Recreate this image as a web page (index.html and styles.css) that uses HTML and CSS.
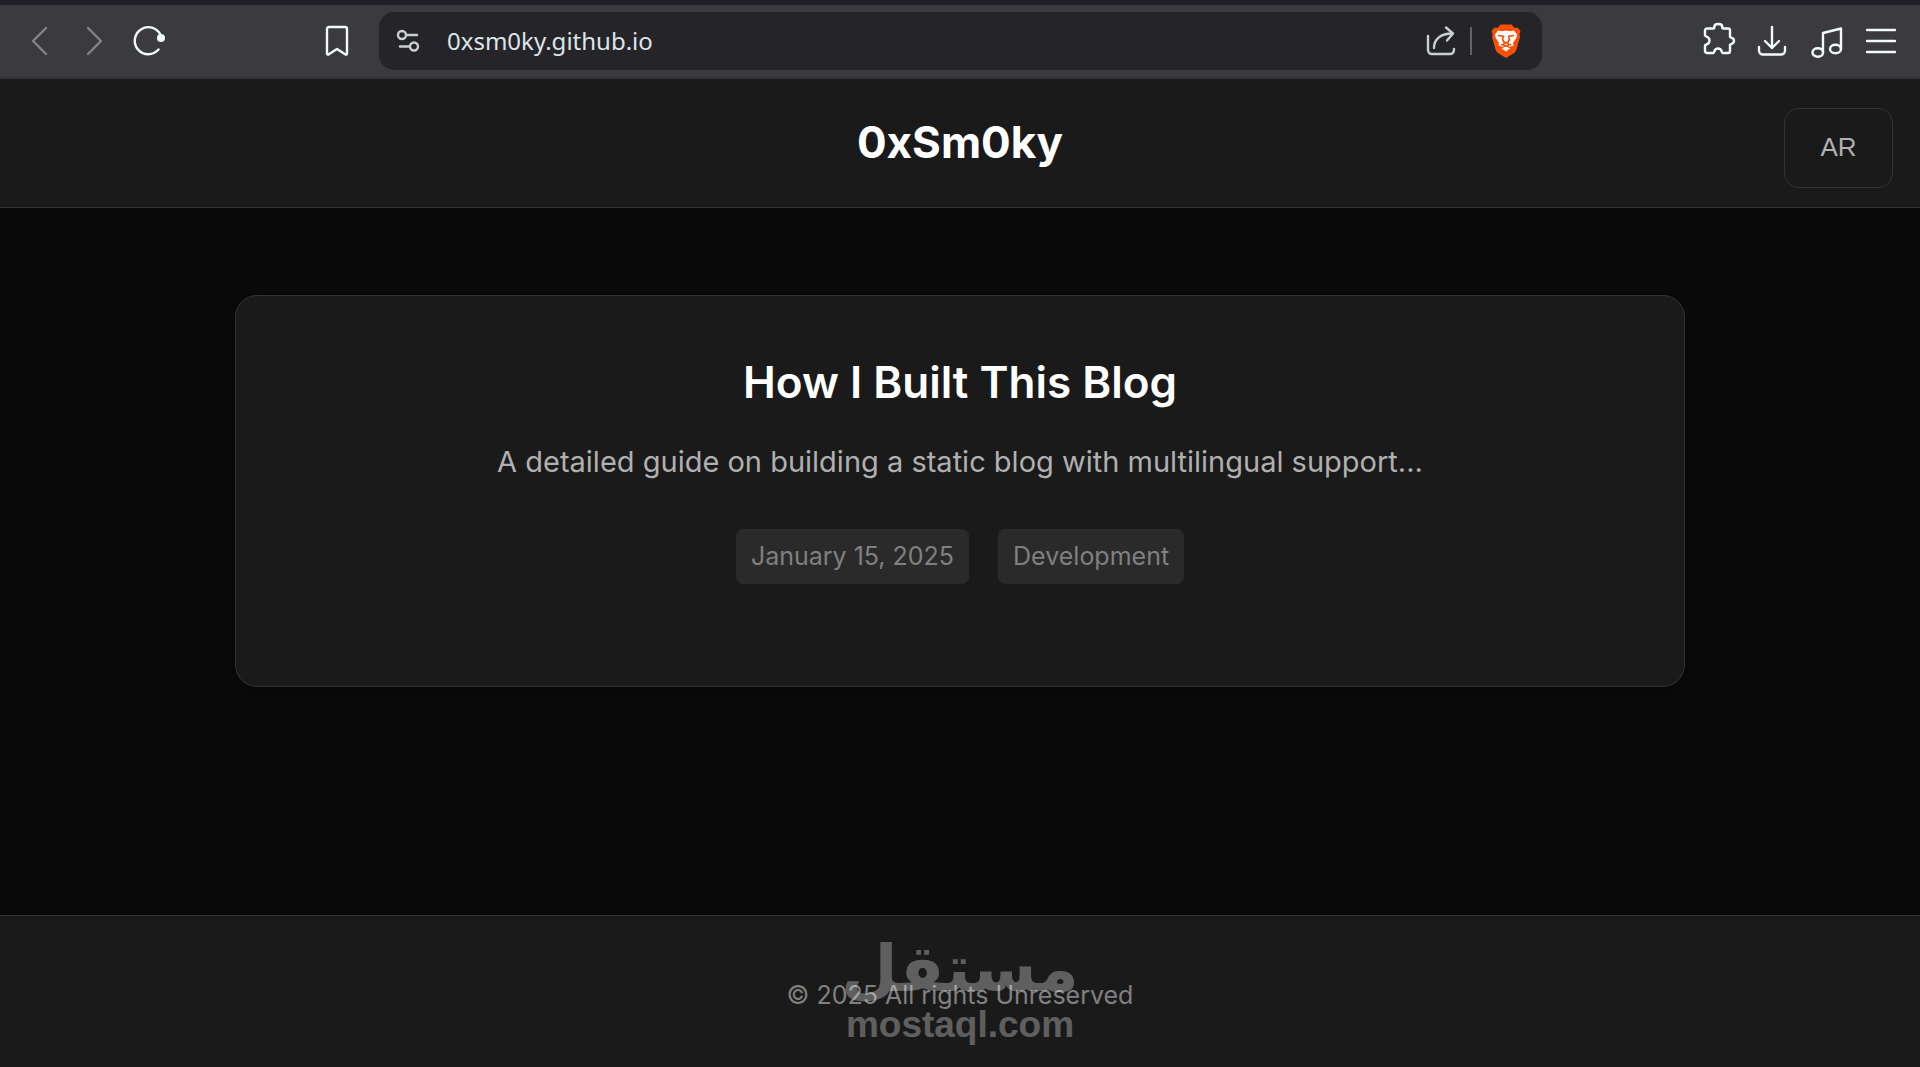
FILE: index.html
```html
<!DOCTYPE html>
<html lang="en">
<head>
    <meta charset="UTF-8">
    <meta name="viewport" content="width=device-width, initial-scale=1.0">
    <title>0xSm0ky</title>
    <link rel="stylesheet" href="styles.css">
</head>
<body>
    <div class="toolbar">
        <div class="toolbar-left">
            <button class="icon-btn dim" aria-label="Back">
                <svg width="34" height="34" viewBox="0 0 34 34"><path d="M23 4 10 17l13 13"/></svg>
            </button>
            <button class="icon-btn dim" aria-label="Forward">
                <svg width="34" height="34" viewBox="0 0 34 34"><path d="m11 4 13 13-13 13"/></svg>
            </button>
            <button class="icon-btn" aria-label="Reload">
                <svg width="34" height="34" viewBox="0 0 34 34"><path d="M29.500 11A13.500 13.500 0 1 0 27.500 25.500"/><circle class="solid" cx="30" cy="14" r="4"/></svg>
            </button>
            <button class="icon-btn bookmark" aria-label="Bookmark">
                <svg width="34" height="34" viewBox="0 0 34 34"><path d="M9 3h16a2 2 0 0 1 2 2v24.500c0 1-1 1.500-1.800.8L17 25l-8.200 5.300c-.8.7-1.800.2-1.800-.8V5a2 2 0 0 1 2-2z"/></svg>
            </button>
        </div>
        <div class="address-bar">
            <button class="icon-btn site" aria-label="Site settings">
                <svg width="24" height="24" viewBox="0 0 24 24"><circle cx="6" cy="6" r="4"/><path d="M11 6h10M4 17.500h9"/><circle cx="18" cy="17.500" r="4"/></svg>
            </button>
            <input type="text" class="url" aria-label="Address" value="0xsm0ky.github.io">
            <button class="icon-btn share" aria-label="Share">
                <svg width="34" height="34" viewBox="0 0 34 34"><path d="M4 12v14a4 4 0 0 0 4 4h18a4 4 0 0 0 4-4v-1M10 24C10 15 17 9.500 28 9.500M22 3.500l7 6-6 7"/></svg>
            </button>
            <span class="divider"></span>
            <button class="icon-btn brave" aria-label="Brave Shields">
                <svg width="30" height="34" viewBox="0 0 30 34">
                    <path fill="#fb4f05" d="M9.500.5h11L23.500 4l3-.5L29.500 7l-1 3 .5 3-3.500 12.500c-.5 1.500-1.500 2.500-2.500 3.500L15 34l-8-5c-1-1-2-2-2.500-3.500L1 13l.5-3-1-3 3-3.500 3 .5z"/>
                    <path fill="#fff" d="m4 10.500 3-4 4 .8 4-.8 4 .8 4-.8 3 4c0 3-1.500 5-4 8l.5 3-4 1.500-3.500-2-3.500 2-4-1.500.5-3c-2.500-3-4-5-4-8zM11 24.500l4-2.200 4 2.200-4 3z"/>
                    <path fill="none" stroke="#fb4f05" stroke-width="1.600" d="m7.500 11.500 5 .8-1 3.200 1.500 2.500v2M22.500 11.500l-5 .8 1 3.200-1.500 2.500v2M10.500 20.500l4.500 1.500 4.500-1.500M13 18l2 1 2-1"/>
                </svg>
            </button>
        </div>
        <div class="toolbar-right">
            <button class="icon-btn" aria-label="Extensions">
                <svg width="34" height="34" viewBox="0 0 34 34"><path d="M5 4.500h6.500c1.200 0 .8-1 .8-1.500 0-4 8-4 8 0 0 .5-.4 1.500.8 1.500H26a2 2 0 0 1 2 2v6.300c0 1.200 4 .2 4 4s-4 2.800-4 4V27a2 2 0 0 1-2 2h-5.500c-1.200 0 0-4.500-4.500-4.500S12.700 29 11.500 29H5a2 2 0 0 1-2-2v-5.500c0-1.200 4.500-.5 4.500-5S3 12.700 3 11.500v-5a2 2 0 0 1 2-2z"/></svg>
            </button>
            <button class="icon-btn" aria-label="Downloads">
                <svg width="34" height="34" viewBox="0 0 34 34"><path d="M16 3v21M9 17l7 7 7-7M3 23v3.500a4 4 0 0 0 4 4h18a4 4 0 0 0 4-4V23"/></svg>
            </button>
            <button class="icon-btn" aria-label="Media">
                <svg width="34" height="34" viewBox="0 0 34 34"><path d="M13 28V9l18-4.500V25"/><ellipse cx="7.800" cy="28.500" rx="5.300" ry="4.200"/><ellipse cx="25.500" cy="25" rx="5.500" ry="4.200"/></svg>
            </button>
            <button class="icon-btn" aria-label="Menu">
                <svg width="34" height="34" viewBox="0 0 34 34"><path d="M3 6h28M3 17h28M3 28h28"/></svg>
            </button>
        </div>
    </div>

    <header>
        <h1>0xSm0ky</h1>
        <button class="lang-btn">AR</button>
    </header>

    <main>
        <article class="post">
            <h2>How I Built This Blog</h2>
            <p>A detailed guide on building a static blog with multilingual support...</p>
            <div class="meta">
                <span>January 15, 2025</span>
                <span>Development</span>
            </div>
        </article>
    </main>

    <footer>
        <p>© 2025 All rights Unreserved</p>
        <div class="watermark">
            <span class="watermark-ar" lang="ar" dir="rtl">مستقل</span>
            <span class="watermark-en">mostaql.com</span>
        </div>
    </footer>
</body>
</html>
```
FILE: styles.css
```css
* {
    box-sizing: border-box;
}
body {
    display: flex;
    flex-direction: column;
    min-height: 100vh;
    margin: 0;
    font-family: Inter, sans-serif;
    background: #0a0a0a;
    color: #fff;
}
h1, h2, p {
    margin: 0;
}
button {
    cursor: pointer;
}

/* browser bar */
.toolbar {
    display: grid;
    grid-template-columns: 379px 1fr 378px;
    align-items: center;
    padding: 7px 0;
    background: #3b3a3f;
    border-top: 5px solid #201f25;
    border-bottom: 2px solid #323136;
}
.toolbar-left, .toolbar-right {
    display: flex;
    align-items: center;
}
.toolbar-left {
    padding: 0 15px 0 13px;
}
.toolbar-right {
    justify-content: flex-end;
    padding-right: 12px;
}
.icon-btn {
    display: flex;
    align-items: center;
    justify-content: center;
    flex: none;
    width: 54px;
    height: 54px;
    padding: 0;
    border: 0;
    background: none;
    color: #f2fbfb;
}
.icon-btn svg {
    fill: none;
    stroke: currentColor;
    stroke-width: 2.4;
    stroke-linecap: round;
    stroke-linejoin: round;
    overflow: visible;
}
.icon-btn .solid {
    fill: currentColor;
    stroke: none;
}
.icon-btn.dim {
    color: #85847f;
}
.icon-btn.bookmark {
    margin-left: auto;
}
.address-bar {
    display: flex;
    align-items: center;
    height: 58px;
    padding: 0 9px 0 2px;
    border-radius: 15px;
    background: #252429;
}
.icon-btn.site, .icon-btn.share {
    color: #c9d0d3;
}
.icon-btn.brave svg {
    stroke: none;
}
.url {
    flex: 1;
    min-width: 0;
    padding: 0 12px 2px;
    border: 0;
    outline: 0;
    background: none;
    color: #dbe5ea;
    font-family: "Noto Sans", sans-serif;
    font-size: 24px;
}
.divider {
    width: 2px;
    height: 28px;
    margin: 0 7px 0 2px;
    background: #636268;
}

/* page */
header {
    display: grid;
    grid-template-columns: 1fr auto 1fr;
    padding: 29px 27px 19px;
    background: #1a1a1a;
    border-bottom: 1px solid #333;
}
h1 {
    grid-column: 2;
    font-size: 44px;
    font-weight: 700;
    line-height: 68px;
}
.lang-btn {
    justify-self: end;
    width: 109px;
    height: 80px;
    padding-bottom: 3px;
    border: 1px solid #333;
    border-radius: 15px;
    background: none;
    color: #b0b0b0;
    font-family: "Liberation Sans", sans-serif;
    font-size: 26px;
}
main {
    flex: 1;
    padding: 87px 29px;
}
.post {
    max-width: 1450px;
    margin: 0 auto;
    padding: 58px 58px 102px;
    border: 1px solid #333;
    border-radius: 22px;
    background: #1a1a1a;
    box-shadow: 0 7px 11px rgba(0, 0, 0, 0.3);
    text-align: center;
}
h2 {
    margin-bottom: 29px;
    font-size: 44px;
    font-weight: 600;
    line-height: 57px;
}
.post p {
    margin-bottom: 45px;
    color: #b0b0b0;
    font-size: 29px;
    line-height: 44px;
}
.meta {
    display: flex;
    justify-content: center;
    gap: 29px;
}
.meta span {
    padding: 6px 15px;
    border-radius: 7px;
    background: #2a2a2a;
    color: #808080;
    font-size: 25px;
    line-height: 43px;
}
footer {
    position: relative;
    padding: 58px 29px 51px;
    background: #1a1a1a;
    border-top: 1px solid #333;
    text-align: center;
}
footer p {
    color: #808080;
    font-size: 25px;
    line-height: 42px;
}
.watermark {
    position: absolute;
    top: 16px;
    left: 0;
    right: 0;
    display: flex;
    flex-direction: column;
    align-items: center;
    opacity: 0.3;
    pointer-events: none;
    font-weight: 700;
}
.watermark-ar {
    font-family: "DejaVu Sans", sans-serif;
    font-size: 65px;
    line-height: 74px;
}
.watermark-en {
    font-family: "Liberation Sans", sans-serif;
    font-size: 37px;
    line-height: 38px;
}
```
